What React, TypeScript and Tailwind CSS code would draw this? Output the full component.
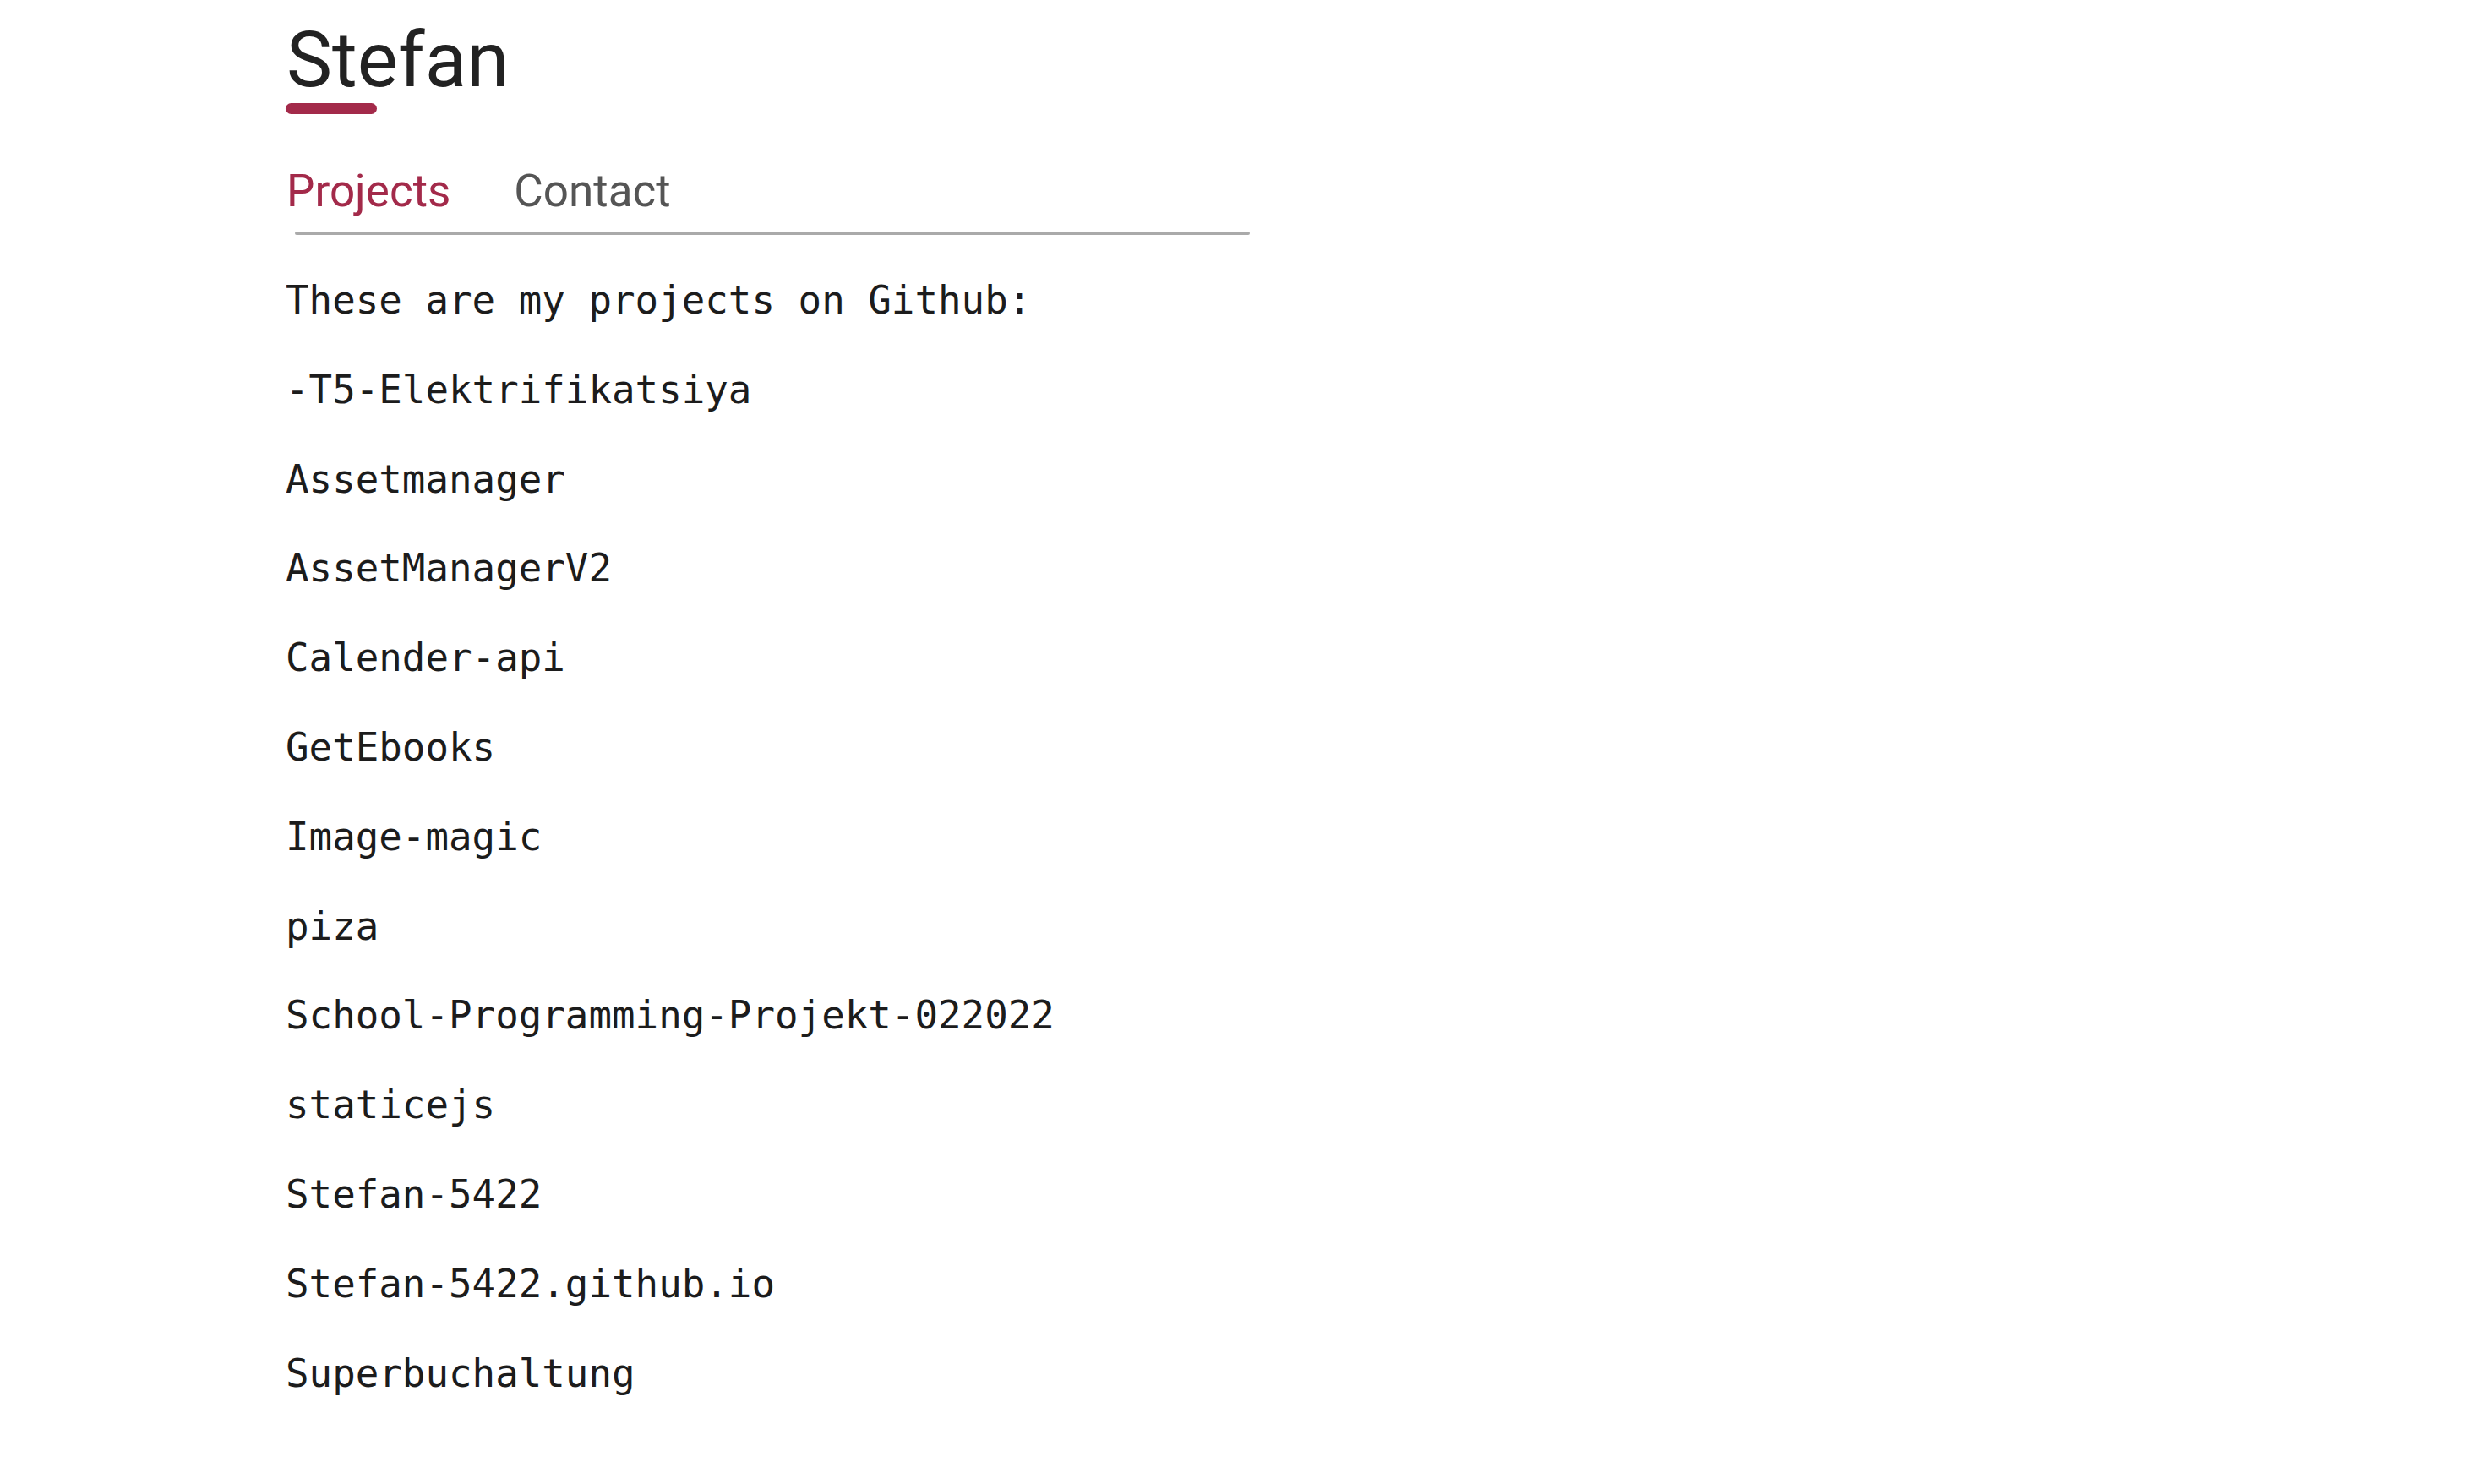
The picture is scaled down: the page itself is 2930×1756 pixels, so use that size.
const projects = [
  '-T5-Elektrifikatsiya',
  'Assetmanager',
  'AssetManagerV2',
  'Calender-api',
  'GetEbooks',
  'Image-magic',
  'piza',
  'School-Programming-Projekt-022022',
  'staticejs',
  'Stefan-5422',
  'Stefan-5422.github.io',
  'Superbuchaltung',
];

export default function App() {
  return (
    <div className="min-h-screen bg-white pl-[338px] pt-[25px]">
      {/* Name + accent bar */}
      <header>
        <h1 className="font-['Roboto',sans-serif] text-[91px] leading-[92px] font-normal text-[#222222] ml-[1px]">
          Stefan
        </h1>
        <div className="mt-[5px] h-[13px] w-[108px] rounded-full bg-[#a32a4a]" />
      </header>

      {/* Tabs */}
      <nav className="mt-[65px]">
        <div className="flex gap-[75px] font-['Roboto',sans-serif] text-[53px] leading-[53px] ml-[1px]">
          <span className="text-[#a32a4a]">Projects</span>
          <span className="text-[#555555]">Contact</span>
        </div>
        <div className="mt-[21px] ml-[11px] h-[4px] w-[1130px] rounded-full bg-[#aaaaaa]" />
      </nav>

      {/* Project list */}
      <main className="mt-[25px] font-['DejaVu_Sans_Mono',monospace] text-[45.8px] leading-[105.8px] text-[#1c1c1c]">
        <p>These are my projects on Github:</p>
        {projects.map((name) => (
          <p key={name}>{name}</p>
        ))}
      </main>
    </div>
  );
}
